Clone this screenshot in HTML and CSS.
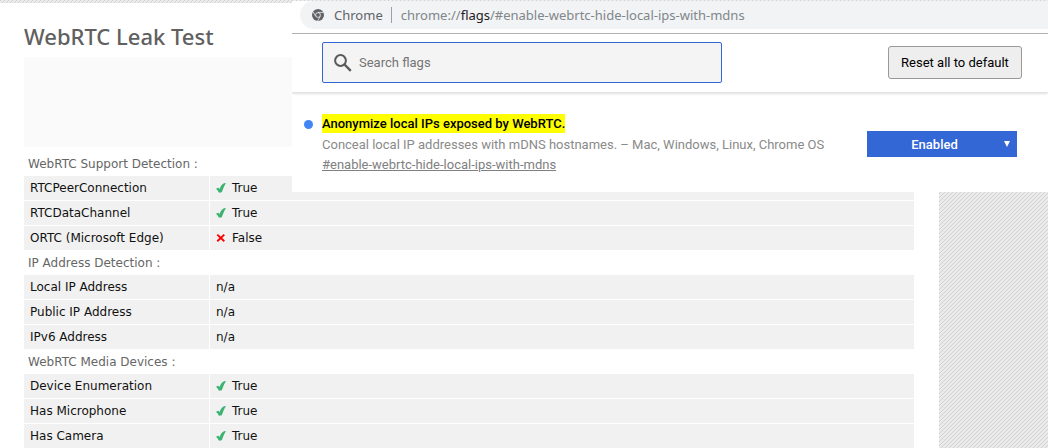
FILE: index.html
```
<!DOCTYPE html>
<html lang="en">
  <head>
    <meta charset="utf-8">
    <title>WebRTC Leak Test</title>
    <link rel="stylesheet" href="styles.css">
  </head>
  <body>
    <svg class="defs" width="0" height="0" aria-hidden="true">
      <symbol id="check" viewBox="0 0 10 10">
        <path d="M0 5.8 L2.2 4.8 L3.6 6 C4.4 3.6 5.8 1.2 8 .2 L10 0 C8.4 2.4 7 5.8 5.8 9.2 L3 9.8 C2.2 8.2 1.2 7 0 5.8 Z" fill="#3cb371"/>
      </symbol>
      <symbol id="cross" viewBox="0 0 10 10">
        <path d="M1.3 1.6 L8.3 8.2 M8.3 1.6 L1.3 8.2" stroke="#f00" stroke-width="1.9"/>
      </symbol>
    </svg>

    <main class="page">
      <h1>WebRTC Leak Test</h1>
      <div class="banner"></div>
      <table class="results">
        <tbody>
          <tr><th class="group" colspan="2">WebRTC Support Detection :</th></tr>
          <tr><td>RTCPeerConnection</td><td><svg class="mark"><use href="#check"/></svg>True</td></tr>
          <tr><td>RTCDataChannel</td><td><svg class="mark"><use href="#check"/></svg>True</td></tr>
          <tr><td>ORTC (Microsoft Edge)</td><td><svg class="mark"><use href="#cross"/></svg>False</td></tr>
        </tbody>
        <tbody>
          <tr><th class="group" colspan="2">IP Address Detection :</th></tr>
          <tr><td>Local IP Address</td><td>n/a</td></tr>
          <tr><td>Public IP Address</td><td>n/a</td></tr>
          <tr><td>IPv6 Address</td><td>n/a</td></tr>
        </tbody>
        <tbody>
          <tr><th class="group" colspan="2">WebRTC Media Devices :</th></tr>
          <tr><td>Device Enumeration</td><td><svg class="mark"><use href="#check"/></svg>True</td></tr>
          <tr><td>Has Microphone</td><td><svg class="mark"><use href="#check"/></svg>True</td></tr>
          <tr><td>Has Camera</td><td><svg class="mark"><use href="#check"/></svg>True</td></tr>
        </tbody>
      </table>
    </main>

    <section class="flags">
      <div class="toolbar">
        <div class="omnibox">
          <svg class="chrome" viewBox="0 0 12 12">
            <circle cx="6" cy="6" r="6" fill="#5f6368"/>
            <circle cx="6" cy="6" r="2.4" fill="none" stroke="#f1f3f4" stroke-width=".8"/>
            <path d="M6 3.4 H11.4 M3.7 7.3 L1.1 2.9 M8.3 7.3 L5.6 11.9" stroke="#f1f3f4" stroke-width=".8"/>
          </svg>
          <span class="label">Chrome</span>
          <span class="url">chrome://<b>flags</b>/#enable-webrtc-hide-local-ips-with-mdns</span>
        </div>
      </div>
      <div class="header">
        <div class="search">
          <svg viewBox="0 0 18 18">
            <circle cx="6.5" cy="6.5" r="5.4" fill="none" stroke="#5a5a5a" stroke-width="2"/>
            <path d="M10.5 10.5 L16.8 16.8" stroke="#5a5a5a" stroke-width="2.4"/>
          </svg>
          <input type="text" placeholder="Search flags" aria-label="Search flags">
        </div>
        <button type="button" class="reset">Reset all to default</button>
      </div>
      <div class="experiment">
        <span class="dot"></span>
        <div class="info">
          <label class="name" for="mdns">Anonymize local IPs exposed by WebRTC.</label>
          <p>Conceal local IP addresses with mDNS hostnames. – Mac, Windows, Linux, Chrome OS</p>
          <a href="#enable-webrtc-hide-local-ips-with-mdns">#enable-webrtc-hide-local-ips-with-mdns</a>
        </div>
        <div class="choice">
          <select id="mdns">
            <option>Default</option>
            <option selected>Enabled</option>
            <option>Disabled</option>
          </select>
          <svg class="arrow" viewBox="0 0 6 6"><path d="M0 0 H6 L3 6 Z" fill="#fff"/></svg>
        </div>
      </div>
    </section>
  </body>
</html>
```
FILE: styles.css
```
*{
  box-sizing:border-box;
}

body{
  margin:0;
  padding-top:3px;
  overflow:hidden;
  background:linear-gradient(135deg,#d0d0d0 0 12.5%,#ebebeb 12.5% 50%,#d0d0d0 50% 62.5%,#ebebeb 62.5%) 0 0/4px 4px;
  font-family:"DejaVu Sans",Verdana,sans-serif;
  font-size:12px;
}

.defs{
  position:absolute;
}

/* leak test page */

.page{
  margin-right:109px;
  padding:18px 25px 0 24px;
  background:white;
}

h1{
  margin:0;
  height:36px;
  color:#606060;
  font:500 22px/31px "Noto Sans",sans-serif;
}

.banner{
  height:90px;
  background:#fafafa;
}

.results{
  width:100%;
  margin-top:4px;
  border-collapse:separate;
  border-spacing:0;
  line-height:24px;
}

.results td,
.results th{
  height:25px;
  padding:0 6px;
  border-bottom:1px solid white;
  text-align:left;
}

.results td{
  background:#f1f1f1;
  color:#111;
}

.results td:first-child{
  width:186px;
  border-right:1px solid white;
}

.results tr:last-child td{
  height:24px;
  border-bottom:0;
}

.results .group{
  padding:0 4px;
  border-bottom:0;
  color:#666;
  font-weight:normal;
}

.mark{
  width:10px;
  height:10px;
  margin-right:6px;
  vertical-align:-1px;
}

/* browser window in front */

.flags{
  position:absolute;
  top:1px;
  left:292px;
  right:0;
  height:191px;
  overflow:hidden;
  background:white;
  font-family:Roboto,sans-serif;
  font-size:13px;
}

.toolbar{
  height:33px;
  padding-left:8px;
  border-bottom:1px solid #b0b0b0;
}

.omnibox{
  display:flex;
  align-items:center;
  height:28px;
  padding-left:12px;
  border-radius:14px 0 0 14px;
  background:#f1f3f4;
  color:#80868b;
  font:13px/28px "Noto Sans",sans-serif;
}

.chrome{
  width:12px;
  height:12px;
}

.label{
  margin-left:10px;
  padding-right:8px;
  border-right:1px solid #9aa0a6;
  color:#5f6368;
  line-height:16px;
}

.url{
  margin-left:9px;
}

.url b{
  color:#202124;
  font-weight:normal;
}

.header{
  display:flex;
  align-items:center;
  justify-content:space-between;
  height:58px;
  padding:0 26px 1px 30px;
  box-shadow:0 2px 2px rgba(0,0,0,.12);
}

.search{
  display:flex;
  align-items:center;
  width:400px;
  height:41px;
  padding-left:11px;
  border:1px solid #3367d6;
  border-radius:2px;
  background:#f4f4f4;
}

.search svg{
  width:18px;
  height:18px;
}

.search input{
  flex:1;
  height:100%;
  padding:0 7px;
  border:0;
  outline:0;
  background:none;
  font:13px Roboto,sans-serif;
}

.search input::placeholder{
  color:#757575;
}

.reset{
  width:134px;
  height:33px;
  padding:0;
  border:1px solid #999;
  border-radius:3px;
  background:#eee;
  color:black;
  font:13px Roboto,sans-serif;
}

.experiment{
  display:flex;
  padding:22px 31px 0 12px;
}

.dot{
  width:9px;
  height:9px;
  margin:6px 9px 0 0;
  border-radius:50%;
  background:#4285f4;
}

.info{
  flex:1;
  color:#8a8a8a;
  line-height:20px;
}

.name{
  display:block;
  width:fit-content;
  margin-bottom:2px;
  background:yellow;
  color:black;
  font-weight:500;
  line-height:19px;
}

.info p{
  margin:0;
}

.info a{
  display:block;
  color:#808080;
}

.choice{
  position:relative;
  width:150px;
  height:26px;
  margin-top:17px;
}

.choice select{
  width:100%;
  height:100%;
  padding:0 15px 0 0;
  appearance:none;
  border:0;
  border-radius:0;
  background:#3367d6;
  color:white;
  font:500 13px Roboto,sans-serif;
  text-align-last:center;
}

.arrow{
  position:absolute;
  top:10px;
  right:7px;
  width:6px;
  height:6px;
}
```
